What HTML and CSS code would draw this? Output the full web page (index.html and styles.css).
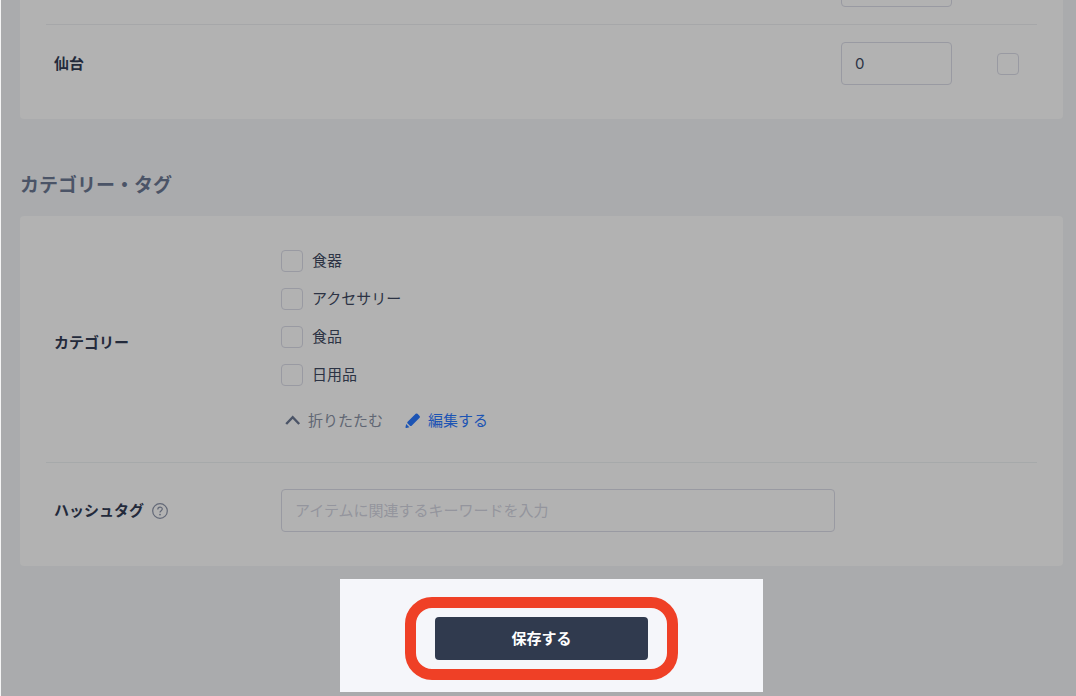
FILE: index.html
```
<!DOCTYPE html>
<html lang="ja">
<head>
  <meta charset="UTF-8" />
  <meta name="viewport" content="width=device-width, initial-scale=1" />
  <title>カテゴリー・タグ</title>
  <link rel="stylesheet" href="styles.css">
</head>
<body>
  <form class="page">
    <section class="card card-stock">
      <div class="stock-row">
        <span class="label"></span>
        <input class="text-input stock-input" type="text" aria-label="在庫数" />
        <input class="check" type="checkbox" aria-label="在庫" />
      </div>
      <div class="stock-row">
        <label class="label" for="sendai">仙台</label>
        <input class="text-input stock-input" type="text" id="sendai" value="0" />
        <input class="check" type="checkbox" aria-label="仙台" />
      </div>
    </section>

    <h2>カテゴリー・タグ</h2>

    <section class="card">
      <div class="row">
        <div class="label" id="category-label">カテゴリー</div>
        <div class="field" role="group" aria-labelledby="category-label">
          <div class="options">
            <label class="option"><input class="check" type="checkbox" /><span>食器</span></label>
            <label class="option"><input class="check" type="checkbox" /><span>アクセサリー</span></label>
            <label class="option"><input class="check" type="checkbox" /><span>食品</span></label>
            <label class="option"><input class="check" type="checkbox" /><span>日用品</span></label>
          </div>
          <div class="actions">
            <button class="fold" type="button">
              <svg width="16" height="16" viewBox="0 0 16 16" aria-hidden="true"><path d="M1.2 11 7.7 4.2 14.2 11" fill="none" stroke="currentColor" stroke-width="2.4"/></svg>
              <span>折りたたむ</span>
            </button>
            <a class="edit" href="#">
              <svg width="16" height="16" viewBox="0 0 16 16" aria-hidden="true"><path d="M2.4 9.1 10.7.8Q11.6 0 12.5.8L14.6 2.9Q15.4 3.8 14.6 4.7L6.4 12.9Q5.8 13.3 5.2 12.9L2.4 10.3Q2 9.7 2.4 9.1ZM1.2 11.1 4.4 14.3 1.4 15Q.3 15.2.5 14.1Z" fill="currentColor"/></svg>
              <span>編集する</span>
            </a>
          </div>
        </div>
      </div>

      <div class="row row-tag">
        <div class="label label-help">
          <label for="hashtag">ハッシュタグ</label>
          <svg width="16" height="16" viewBox="0 0 16 16" aria-hidden="true"><circle cx="8" cy="8" r="7.3" fill="none" stroke="currentColor" stroke-width="1.2"/><path d="M5.8 6.4C5.8 3.4 10.3 3.5 10.3 6.1 10.3 7.8 8 7.7 8 9.5" fill="none" stroke="currentColor" stroke-width="1.2"/><circle cx="8" cy="11.6" r=".9" fill="currentColor"/></svg>
        </div>
        <div class="field">
          <input class="text-input" type="text" id="hashtag" placeholder="アイテムに関連するキーワードを入力" />
        </div>
      </div>
    </section>

    <div class="submit">
      <div class="submit-inner">
        <div class="spotlight"></div>
        <div class="ring"></div>
        <button class="save" type="submit">保存する</button>
      </div>
    </div>
  </form>
</body>
</html>
```
FILE: styles.css
```
* {
  box-sizing: border-box;
}
body {
  margin: 0;
  font-family: Inter, "Noto Sans CJK JP", sans-serif;
  font-size: 15px;
  line-height: 22px;
  color: #2c3344;
  background: #aaabad;
  border-left: 1px solid #f4f4f4;
  overflow: hidden;
}
.page {
  padding: 0 13px 0 19px;
}
.card {
  background: #b2b2b2;
  border-radius: 4px;
  padding: 0 26px;
}
.card-stock {
  margin-top: -53px;
  padding-bottom: 17px;
}
.label {
  font-weight: bold;
  color: #232a3b;
}

/* 在庫 */
.stock-row {
  display: flex;
  align-items: center;
  gap: 45px;
  padding: 17px 18px 17px 8px;
}
.stock-row + .stock-row {
  border-top: 1px solid #a6a7a9;
}
.stock-row .label {
  flex: 1;
}
.text-input {
  width: 100%;
  height: 43px;
  padding: 0 13px;
  font: inherit;
  color: #2c3344;
  background: transparent;
  border: 1px solid #999aa2;
  border-radius: 4px;
}
.text-input::placeholder {
  color: #94959d;
  opacity: 1;
}
.stock-input {
  width: 111px;
}
.check {
  appearance: none;
  flex: none;
  width: 22px;
  height: 22px;
  margin: 0;
  border: 1px solid #999aa2;
  border-radius: 4px;
}

h2 {
  margin: 53px 0 16px;
  font-size: 19px;
  line-height: 28px;
  color: #4b5467;
}

/* カテゴリー */
.row {
  display: flex;
  align-items: center;
  padding: 34px 8px 27px;
}
.row-tag {
  padding: 26px 8px 34px;
  border-top: 1px solid #a6a9aa;
}
.row .label {
  flex: none;
  width: 227px;
}
.field {
  flex: 1;
  max-width: 554px;
}
.options {
  display: flex;
  flex-direction: column;
  align-items: flex-start;
  gap: 16px;
}
.option {
  display: flex;
  align-items: center;
  gap: 9px;
}
.actions {
  display: flex;
  align-items: center;
  gap: 22px;
  height: 28px;
  margin-top: 21px;
  padding-left: 4px;
}
.fold,
.edit {
  display: flex;
  align-items: center;
  gap: 7px;
  padding: 0;
  font: inherit;
  color: #606673;
  background: none;
  border: 0;
  text-decoration: none;
  cursor: pointer;
}
.fold svg {
  color: #4b5467;
}
.edit {
  color: #1c54b4;
}
.label-help {
  display: flex;
  align-items: center;
  gap: 8px;
}
.label-help svg {
  color: #626877;
}

/* 保存 */
.submit {
  display: flex;
  justify-content: center;
  padding: 51px 0 36px;
}
.submit-inner {
  position: relative;
}
.save {
  position: relative;
  display: block;
  width: 213px;
  height: 43px;
  font: inherit;
  font-weight: bold;
  color: #fff;
  background: #303a4e;
  border: 0;
  border-radius: 4px;
  cursor: pointer;
}
.spotlight {
  position: absolute;
  inset: -38px -115px -32px -95px;
  background: #f5f6fa;
}
.ring {
  position: absolute;
  inset: -20px -30px;
  border: 11px solid #ef4026;
  border-radius: 27px;
}
```
